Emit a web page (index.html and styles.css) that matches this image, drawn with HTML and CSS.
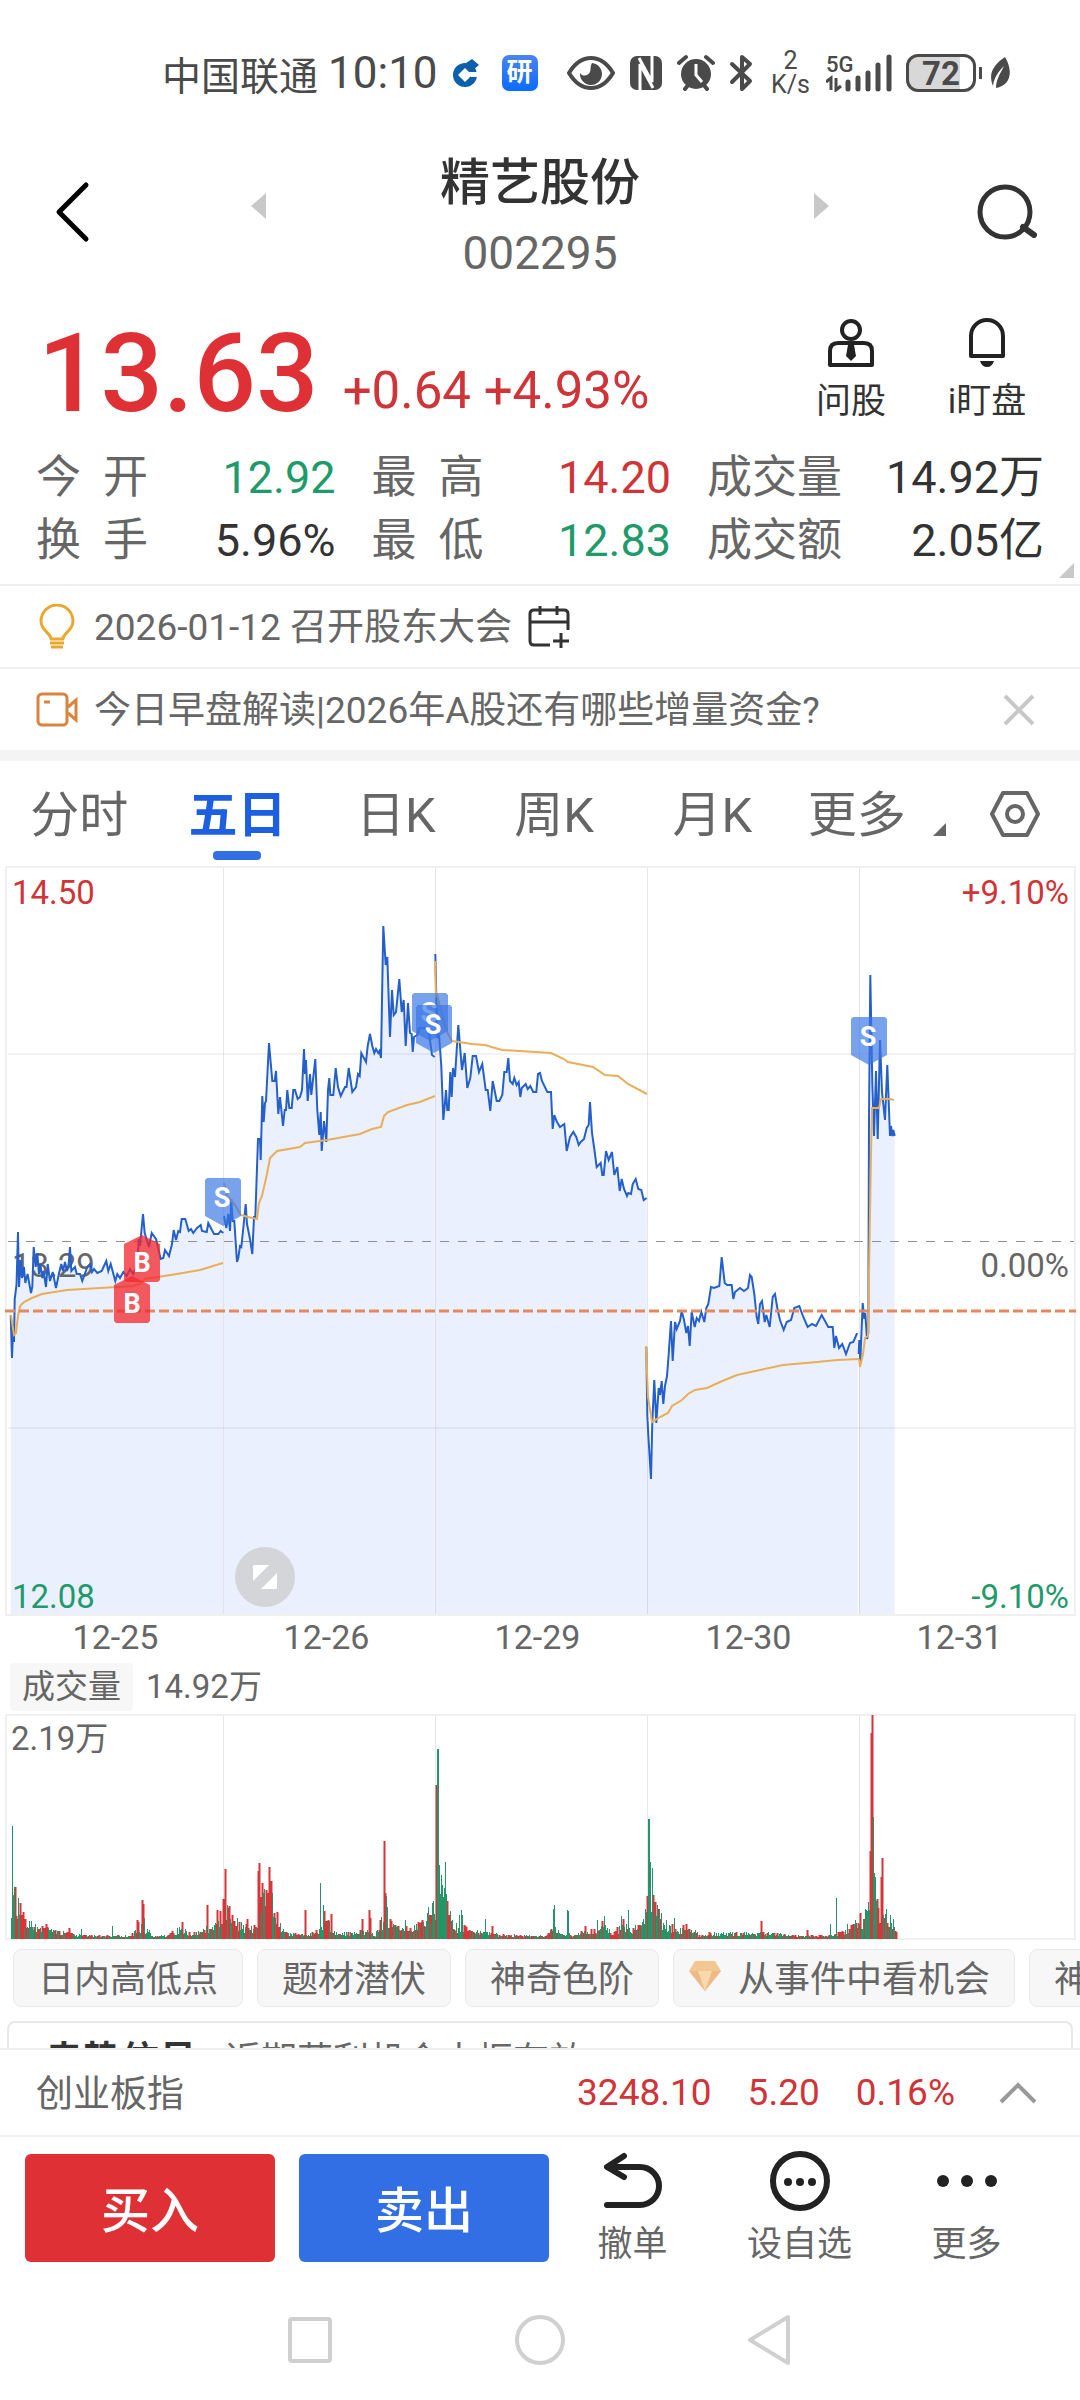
FILE: index.html
```html
<!DOCTYPE html>
<html lang="zh-CN">
<head>
    <meta charset="UTF-8">
    <meta name="viewport" content="width=device-width, initial-scale=1.0">
    <title>精艺股份 002295</title>
    <link rel="stylesheet" href="styles.css">
</head>
<body>
    <div class="app">
        <div class="status-bar">
            <div class="status-group">
                <span class="carrier">中国联通</span>
                <span class="clock">10:10</span>
                <svg class="bank-icon" width="28" height="30" viewBox="0 0 28 30">
                    <circle cx="13" cy="17" r="12" fill="#0b60ab"/>
                    <path d="M14 5l6-4 7 6-6 5z" fill="#0b60ab"/>
                    <path d="M13 10l7 7-7 7-7-7z" fill="#fff"/>
                    <path d="M17 14h11v5h-9z" fill="#fff"/>
                </svg>
                <span class="app-badge">研</span>
            </div>
            <div class="status-group">
                <svg width="48" height="36" viewBox="0 0 48 36">
                    <path d="M2 18C8 8 16 3 24 3s16 5 22 15c-6 10-14 15-22 15S8 28 2 18z" fill="none" stroke="#4a4a4a" stroke-width="4"/>
                    <path d="M25 8a11 11 0 1 1-12 10c3 4 8 3 10-1 1-3 0-6 2-9z" fill="#4a4a4a"/>
                </svg>
                <svg width="34" height="36" viewBox="0 0 34 36">
                    <rect x="1" y="1" width="32" height="34" rx="7" fill="#4a4a4a"/>
                    <path d="M11 36V9l13 24M23 0v27L10 3" fill="none" stroke="#fff" stroke-width="3"/>
                </svg>
                <svg width="38" height="38" viewBox="0 0 38 38">
                    <circle cx="19" cy="20" r="15" fill="#4a4a4a"/>
                    <path d="M2 9l7-6M36 9l-7-6M8 35l4-5M30 35l-4-5" stroke="#4a4a4a" stroke-width="4" stroke-linecap="round"/>
                    <path d="M19 10v11l6 7" fill="none" stroke="#fff" stroke-width="3"/>
                </svg>
                <svg width="26" height="38" viewBox="0 0 26 38">
                    <path d="M3 10l18 17-8 8V3l8 7L3 28" fill="none" stroke="#4a4a4a" stroke-width="4" stroke-linejoin="round" stroke-linecap="round"/>
                </svg>
                <span class="net-speed"><span>2</span><span>K/s</span></span>
                <span class="signal">
                    <span class="signal-type">5G</span>
                    <svg width="66" height="38" viewBox="0 0 66 38">
                        <path d="M0 28l5-4v12M10 24v12l5-4" fill="none" stroke="#4a4a4a" stroke-width="3"/>
                        <path d="M22 28v7M32 24v11M42 19v16M52 11v24M63 3v32" stroke="#4a4a4a" stroke-width="5" stroke-linecap="round"/>
                    </svg>
                </span>
                <span class="battery">72</span>
                <svg class="leaf" width="22" height="34" viewBox="0 0 22 34">
                    <path d="M15 1C3 9-2 18 3 30 4 22 8 16 14 10 10 18 6 24 6 32c14-2 18-16 9-31z" fill="#4a4a4a"/>
                </svg>
            </div>
        </div>

        <main class="content">
            <header class="header">
                <button class="icon-btn back-btn" aria-label="返回">
                    <svg width="36" height="62" viewBox="0 0 36 62"><path d="M32 4L5 31l27 27" fill="none" stroke="#000" stroke-width="5" stroke-linecap="round" stroke-linejoin="round"/></svg>
                </button>
                <div class="stock-switch">
                    <button class="icon-btn" aria-label="上一只">
                        <svg width="16" height="26" viewBox="0 0 16 26"><path d="M16 0v26L1 13z" fill="#c8c8c8"/></svg>
                    </button>
                    <div class="stock-name">
                        <h1>精艺股份</h1>
                        <span>002295</span>
                    </div>
                    <button class="icon-btn" aria-label="下一只">
                        <svg width="16" height="26" viewBox="0 0 16 26"><path d="M0 0v26l15-13z" fill="#c8c8c8"/></svg>
                    </button>
                </div>
                <button class="icon-btn search-btn" aria-label="搜索">
                    <svg width="62" height="58" viewBox="0 0 62 58"><circle cx="29" cy="29" r="25" fill="none" stroke="#333" stroke-width="5"/><path d="M47 44l11 8" stroke="#333" stroke-width="6" stroke-linecap="round"/></svg>
                </button>
            </header>

            <section class="quote">
                <span class="price">13.63</span>
                <span class="change">+0.64 +4.93%</span>
                <div class="quote-actions">
                    <button class="quote-btn">
                        <svg width="46" height="50" viewBox="0 0 46 50">
                            <circle cx="23" cy="12" r="9" fill="none" stroke="#222" stroke-width="4"/>
                            <path d="M2 47V33q0-8 8-8h26q8 0 8 8v14z" fill="none" stroke="#222" stroke-width="4" stroke-linejoin="round"/>
                            <path d="M20 27h6l2 11-5 5-5-5z" fill="#222"/>
                        </svg>
                        问股
                    </button>
                    <button class="quote-btn">
                        <svg width="40" height="50" viewBox="0 0 40 50">
                            <path d="M4 38V18a16 16 0 0 1 32 0v20z" fill="none" stroke="#222" stroke-width="4" stroke-linejoin="round"/>
                            <path d="M13 43h14q-2 6-7 6t-7-6z" fill="#222"/>
                        </svg>
                        i盯盘
                    </button>
                </div>
            </section>

            <dl class="stats">
                <div><dt>今开</dt><dd class="down">12.92</dd></div>
                <div><dt>最高</dt><dd class="up">14.20</dd></div>
                <div><dt>成交量</dt><dd>14.92万</dd></div>
                <div><dt>换手</dt><dd>5.96%</dd></div>
                <div><dt>最低</dt><dd class="down">12.83</dd></div>
                <div><dt>成交额</dt><dd>2.05亿</dd></div>
            </dl>

            <div class="notice">
                <svg width="38" height="46" viewBox="0 0 38 46">
                    <path d="M13 35c0-6-10-8-10-18a16 16 0 0 1 32 0c0 10-10 12-10 18z" fill="none" stroke="#e9a72c" stroke-width="3" stroke-linejoin="round"/>
                    <path d="M12 39h14M13 43h12" stroke="#e9a72c" stroke-width="3"/>
                </svg>
                <a href="#">2026-01-12 召开股东大会</a>
                <svg width="42" height="44" viewBox="0 0 42 44">
                    <path d="M22 40H6q-4 0-4-4V9q0-4 4-4h30q4 0 4 4v16M2 17h38M12 1v9M29 1v9M33 28v15M25 36h16" fill="none" stroke="#333" stroke-width="3"/>
                </svg>
            </div>
            <div class="notice">
                <svg width="42" height="36" viewBox="0 0 42 36">
                    <rect x="2" y="2" width="29" height="31" rx="4" fill="none" stroke="#d8843f" stroke-width="3"/>
                    <path d="M8 10h6M32 15l8-7v20l-8-7" fill="none" stroke="#d8843f" stroke-width="3"/>
                </svg>
                <a href="#">今日早盘解读|2026年A股还有哪些增量资金?</a>
                <button class="close-btn" aria-label="关闭">
                    <svg width="32" height="32" viewBox="0 0 32 32"><path d="M2 2l28 28M30 2L2 30" stroke="#c8c8c8" stroke-width="4"/></svg>
                </button>
            </div>

            <nav class="tabs">
                <button>分时</button>
                <button class="active">五日</button>
                <button>日K</button>
                <button>周K</button>
                <button>月K</button>
                <button class="more-tab">更多</button>
                <button class="settings" aria-label="设置">
                    <svg width="52" height="48" viewBox="0 0 52 48">
                        <path d="M14 3h24l11 21-11 21H14L3 24z" fill="none" stroke="#666" stroke-width="4" stroke-linejoin="round"/>
                        <circle cx="26" cy="24" r="8" fill="none" stroke="#666" stroke-width="4"/>
                    </svg>
                </button>
            </nav>

            <div class="chart">
                <svg id="priceChart" viewBox="0 0 1080 750">
                    <g id="areas" class="area"></g>
                    <g class="grid">
                        <path d="M8 188H1074M8 562H1074M223.500 1V748M435.500 1V748M647.500 1V748M859.500 1V748"/>
                        <rect class="frame" x="6" y="1" width="1069" height="748"/>
                    </g>
                    <path class="zero-line" d="M8 375.500H1074"/>
                    <text class="axis mid" x="12" y="411">13.29</text>
                    <g id="prices" class="price-line"></g>
                    <g id="averages" class="avg-line"></g>
                    <path class="cost-line" d="M5 445H1076"/>
                    <g id="marks"></g>
                    <text class="axis up" x="12" y="38">14.50</text>
                    <text class="axis up end" x="1069" y="38">+9.10%</text>
                    <text class="axis mid end" x="1069" y="411">0.00%</text>
                    <text class="axis down" x="12" y="742">12.08</text>
                    <text class="axis down end" x="1069" y="742">-9.10%</text>
                </svg>
                <button class="expand-btn" aria-label="全屏">
                    <svg width="26" height="26" viewBox="0 0 26 26"><path d="M2 1h15L1 17V2zM25 9v15l-1 1H9z" fill="#fff"/></svg>
                </button>
            </div>
            <div class="dates">
                <span>12-25</span><span>12-26</span><span>12-29</span><span>12-30</span><span>12-31</span>
            </div>

            <div class="volume-head">
                <button>成交量</button>
                <span>14.92万</span>
            </div>
            <svg class="volume-chart" viewBox="0 0 1080 228">
                <g class="grid">
                    <path d="M223.500 1V226M435.500 1V226M647.500 1V226M859.500 1V226"/>
                    <rect class="frame" x="6" y="2" width="1069" height="224"/>
                </g>
                <path id="volUp" class="vol-up"/>
                <path id="volDown" class="vol-down"/>
                <text class="axis mid" x="11" y="37">2.19万</text>
            </svg>

            <div class="chips">
                <button>日内高低点</button>
                <button>题材潜伏</button>
                <button>神奇色阶</button>
                <button class="chip-vip">
                    <svg width="34" height="32" viewBox="0 0 34 32">
                        <path d="M7 1h20l6 10-16 20L1 11z" fill="#f3c791"/>
                        <path d="M1 11h32L17 31z" fill="#efb987"/>
                        <path d="M10 11h14l-7 20z" fill="#f8d9ad"/>
                    </svg>
                    从事件中看机会
                </button>
                <button>神奇电波</button>
            </div>

            <div class="signal-card">
                <strong>走势信号</strong>
                <span>近期获利机会中枢有效</span>
            </div>
        </main>

        <footer>
            <div class="index-row">
                <span class="index-name">创业板指</span>
                <span class="up">3248.10</span>
                <span class="up">5.20</span>
                <span class="up">0.16%</span>
                <button class="icon-btn" aria-label="展开">
                    <svg width="38" height="22" viewBox="0 0 38 22"><path d="M2 20L19 3l17 17" fill="none" stroke="#999" stroke-width="4"/></svg>
                </button>
            </div>
            <div class="trade-bar">
                <button class="trade-btn buy">买入</button>
                <button class="trade-btn sell">卖出</button>
                <div class="tools">
                    <button>
                        <svg width="62" height="62" viewBox="0 0 62 62"><path d="M22 6L5 17l17 10M7 17h31a19 19 0 0 1 0 38H5" fill="none" stroke="#222" stroke-width="6" stroke-linecap="round" stroke-linejoin="round"/></svg>
                        撤单
                    </button>
                    <button>
                        <svg width="62" height="62" viewBox="0 0 62 62"><circle cx="31" cy="31" r="27" fill="none" stroke="#222" stroke-width="6"/><circle cx="19" cy="32" r="4" fill="#222"/><circle cx="31" cy="32" r="4" fill="#222"/><circle cx="43" cy="32" r="4" fill="#222"/></svg>
                        设自选
                    </button>
                    <button>
                        <svg width="62" height="62" viewBox="0 0 62 62"><circle cx="7" cy="31" r="6" fill="#222"/><circle cx="31" cy="31" r="6" fill="#222"/><circle cx="55" cy="31" r="6" fill="#222"/></svg>
                        更多
                    </button>
                </div>
            </div>
            <div class="system-nav">
                <button aria-label="最近任务"><svg width="50" height="52" viewBox="0 0 50 52"><rect x="5" y="5" width="40" height="42" rx="2" fill="none" stroke="#d0d0d0" stroke-width="4"/></svg></button>
                <button aria-label="主页"><svg width="50" height="52" viewBox="0 0 50 52"><circle cx="25" cy="26" r="23" fill="none" stroke="#d0d0d0" stroke-width="4"/></svg></button>
                <button aria-label="返回"><svg width="50" height="52" viewBox="0 0 50 52"><path d="M43 3v46L5 26z" fill="none" stroke="#d0d0d0" stroke-width="4" stroke-linejoin="round"/></svg></button>
            </div>
        </footer>
    </div>
    <script src="chart.js"></script>
</body>
</html>
```
FILE: styles.css
```css
* {
    box-sizing: border-box;
}

body {
    margin: 0;
    font-family: Roboto, "Noto Sans CJK SC", sans-serif;
    background: #fff;
    color: #333;
}

button {
    padding: 0;
    border: none;
    background: none;
    font: inherit;
    color: inherit;
    cursor: pointer;
}

svg {
    display: block;
    flex-shrink: 0;
}

.up {
    color: #cf3438;
    fill: #cf3438;
}

.down {
    color: #1f9a6b;
    fill: #1f9a6b;
}

.app {
    display: flex;
    flex-direction: column;
    height: 100vh;
}

.content {
    flex: 1;
    min-height: 0;
    overflow: hidden;
}

/* Status bar */
.status-bar {
    display: flex;
    justify-content: space-between;
    align-items: center;
    height: 146px;
    padding: 0 68px 0 162px;
    color: #4a4a4a;
}

.status-group {
    display: flex;
    align-items: center;
    gap: 14px;
}

.carrier {
    font-size: 39px;
}

.clock {
    font-size: 44px;
    margin-left: -4px;
}

.app-badge {
    width: 36px;
    height: 36px;
    margin-left: 8px;
    border-radius: 7px;
    background: linear-gradient(#4b84ee, #0a6cff);
    color: #fff;
    font-size: 26px;
    font-weight: 700;
    line-height: 34px;
    text-align: center;
}

.net-speed {
    display: flex;
    flex-direction: column;
    align-items: center;
    padding: 0 2px;
    font-size: 25px;
    line-height: 24px;
}

.signal {
    position: relative;
}

.signal-type {
    position: absolute;
    top: 0;
    left: 0;
    font-size: 22px;
    font-weight: 500;
    line-height: 22px;
}

.battery {
    position: relative;
    width: 70px;
    height: 38px;
    border: 3px solid #4a4a4a;
    border-radius: 12px;
    background: linear-gradient(to right, #d8d8d8 80%, #fff 80%);
    font-size: 33px;
    font-weight: 700;
    line-height: 33px;
    text-align: center;
}

.battery::after {
    content: "";
    position: absolute;
    top: 10px;
    right: -9px;
    width: 3px;
    height: 12px;
    background: #4a4a4a;
}

/* Header */
.header {
    display: grid;
    grid-template-columns: 1fr 580px 1fr;
    grid-template-rows: 100%;
    align-items: center;
    height: 140px;
    padding: 0 42px 8px;
}

.icon-btn {
    display: flex;
}

.back-btn {
    padding-left: 12px;
}

.search-btn {
    justify-self: end;
}

.stock-switch {
    display: flex;
    justify-content: space-between;
    align-items: center;
}

.stock-switch .icon-btn {
    padding-bottom: 12px;
}

.stock-name {
    display: flex;
    flex-direction: column;
    align-items: center;
    padding-top: 10px;
}

.stock-name h1 {
    margin: 0;
    font-size: 50px;
    font-weight: 500;
    line-height: 72px;
}

.stock-name span {
    font-size: 46px;
    line-height: 68px;
    color: #666;
}

/* Quote */
.quote {
    display: flex;
    align-items: flex-end;
    height: 156px;
    padding: 0 53px 18px 38px;
}

.price {
    font-size: 110px;
    font-weight: 500;
    line-height: 100px;
    color: #df3035;
}

.change {
    margin-left: 24px;
    font-size: 51px;
    line-height: 66px;
    color: #cf3438;
}

.quote-actions {
    display: flex;
    gap: 56px;
    margin-left: auto;
}

.quote-btn {
    display: flex;
    flex-direction: column;
    align-items: center;
    gap: 12px;
    min-width: 80px;
    font-size: 35px;
    line-height: 44px;
}

.stats {
    position: relative;
    display: grid;
    grid-template-columns: 8fr 8fr 9fr;
    column-gap: 36px;
    height: 142px;
    margin: 0;
    padding: 5px 36px 12px;
    font-size: 45px;
    line-height: 62px;
}

.stats::after {
    content: "";
    position: absolute;
    right: 6px;
    bottom: 6px;
    border-left: 15px solid transparent;
    border-bottom: 15px solid #c8c8c8;
}

.stats div {
    display: flex;
    justify-content: space-between;
}

.stats dt {
    width: 112px;
    color: #666;
    text-align: justify;
    text-align-last: justify;
}

.stats div:nth-child(3n) dt {
    width: auto;
}

.stats dd {
    margin: 0;
}

/* Notices */
.notice {
    display: flex;
    align-items: center;
    gap: 16px;
    height: 83px;
    padding: 0 40px 0 36px;
    border-top: 2px solid #f0f0f0;
    font-size: 37px;
}

.notice svg:first-child {
    width: 42px;
}

.notice a {
    padding-bottom: 6px;
    color: #666;
    text-decoration: none;
}

.close-btn {
    margin-left: auto;
}

/* Tabs */
.tabs {
    display: grid;
    grid-template-columns: repeat(6, 1fr) 130px;
    height: 116px;
    border-top: 11px solid #f4f4f4;
    font-size: 49px;
    color: #666;
}

.tabs button {
    position: relative;
    padding-bottom: 6px;
}

.tabs .active {
    color: #1c5fe0;
    font-weight: 700;
}

.tabs .active::after {
    content: "";
    position: absolute;
    bottom: 6px;
    left: 50%;
    width: 48px;
    height: 9px;
    margin-left: -24px;
    border-radius: 4px;
    background: #336fe4;
}

.tabs .more-tab {
    padding-right: 28px;
}

.more-tab::after {
    content: "";
    position: absolute;
    right: 4px;
    bottom: 30px;
    border-left: 13px solid transparent;
    border-bottom: 13px solid #666;
}

.tabs .settings {
    display: flex;
    justify-content: center;
    align-items: center;
    padding-bottom: 0;
}

/* Charts */
.chart {
    position: relative;
}

.chart > svg,
.volume-chart {
    width: 100%;
}

.grid {
    fill: none;
    stroke: #3c3c50;
    stroke-opacity: 0.12;
}

.frame {
    stroke: #f0f0f0;
    stroke-opacity: 1;
    stroke-width: 2;
}

.area {
    fill: #eaf0fe;
}

.price-line {
    fill: none;
    stroke: #2560ca;
    stroke-width: 2;
}

.avg-line {
    fill: none;
    stroke: #e9ae57;
    stroke-width: 2;
}

.zero-line {
    stroke: #909090;
    stroke-dasharray: 9 9;
}

.cost-line {
    stroke: #e28a5e;
    stroke-width: 3;
    stroke-dasharray: 10 4;
}

.axis {
    font-size: 33px;
}

.mid {
    fill: #666;
}

.end {
    text-anchor: end;
}

.mark-sell {
    fill: #3a76e4;
    fill-opacity: 0.68;
}

.mark-buy {
    fill: #f5282d;
    fill-opacity: 0.76;
}

.mark-text {
    fill: #fff;
    font-size: 27px;
    font-weight: 700;
    text-anchor: middle;
}

.expand-btn {
    position: absolute;
    left: 235px;
    bottom: 9px;
    display: flex;
    justify-content: center;
    align-items: center;
    width: 60px;
    height: 60px;
    border-radius: 50%;
    background: #d4d5d9;
}

.dates {
    display: flex;
    height: 45px;
    padding: 0 15px 0 10px;
    font-size: 34px;
    line-height: 42px;
    color: #666;
}

.dates span {
    flex: 1;
    text-align: center;
}

.volume-head {
    display: flex;
    align-items: center;
    gap: 13px;
    height: 52px;
    padding-left: 10px;
    font-size: 33px;
    line-height: 46px;
    color: #666;
}

.volume-head button {
    height: 48px;
    padding: 0 12px;
    border-radius: 4px;
    background: #f7f7f7;
}

.vol-up {
    stroke: #d6363a;
    stroke-width: 2;
}

.vol-down {
    stroke: #259468;
    stroke-width: 1;
}

/* Chips */
.chips {
    display: flex;
    gap: 14px;
    padding: 8px 13px 14px;
    overflow: hidden;
}

.chips button {
    display: flex;
    flex-shrink: 0;
    align-items: center;
    height: 58px;
    padding: 0 24px 4px;
    border: 1px solid #eaeaea;
    border-radius: 8px;
    background: #f7f7f7;
    font-size: 36px;
    color: #666;
}

.chips .chip-vip {
    gap: 16px;
    padding-left: 14px;
}

.signal-card {
    display: flex;
    align-items: baseline;
    gap: 28px;
    margin: 0 7px;
    padding: 6px 36px;
    border: 2px solid #e8e8e8;
    border-radius: 8px;
    font-size: 36px;
    color: #666;
}

.signal-card strong {
    font-size: 38px;
    color: #333;
}

/* Footer */
.index-row {
    display: flex;
    align-items: center;
    gap: 36px;
    height: 87px;
    padding: 0 43px 0 36px;
    border-top: 2px solid #f0f0f0;
    font-size: 37px;
}

.index-name {
    margin-right: auto;
    padding-bottom: 4px;
    color: #666;
}

.index-row .icon-btn {
    margin-left: 8px;
}

.trade-bar {
    display: flex;
    gap: 24px;
    height: 145px;
    padding: 17px 30px 0 25px;
    border-top: 2px solid #f0f0f0;
}

.trade-btn {
    width: 250px;
    height: 108px;
    padding-bottom: 4px;
    border-radius: 6px;
    color: #fff;
    font-size: 49px;
    font-weight: 500;
}

.buy {
    background: #df3035;
}

.sell {
    background: #336fe4;
}

.tools {
    display: flex;
    flex: 1;
    margin-left: -24px;
}

.tools button {
    display: flex;
    flex: 1;
    flex-direction: column;
    align-items: center;
    height: 124px;
    margin-top: -4px;
    font-size: 35px;
    line-height: 66px;
    color: #666;
}

.system-nav {
    display: flex;
    height: 120px;
    padding: 34px 18% 0;
}

.system-nav button {
    display: flex;
    flex: 1;
    justify-content: center;
}
```
FILE: chart.js
```js
const SVG_NS = 'http://www.w3.org/2000/svg';
const CHART_BOTTOM = 748;

// One "x,y" list per trading day
const prices = [
    '10.7,449 12,492 13.3,458 14,476 14.7,433 16.5,419 18,366 19,421 20.6,394 22,412 24,401 25.3,417 27.6,408 31,427 32.3,421 33.7,381 35.7,401 37.3,387 39,408 40.3,398 42.3,412 43.5,405 46,421 47.7,398 50,415 52.7,406 56,422 59.3,406 61.3,398 63,405 65,396 67,405 68.7,398 70,381 71.3,405 75,401 76.7,408 80,408 82.3,415 87.3,401 90,398 92,406 94,403 97.3,407 101.7,405 104,400 106.3,395 108.3,405 110.7,398 115.3,415 117.3,408 120,412 123.3,406 126.7,410 130,403 133.3,408 137.3,398 138.7,373 140,380 143,348 144.7,367 149,381 151.7,367 156,373 160.7,393 163.3,392 165,384 169,390 172,378 173.7,364 176,374 178.3,365 180,366 181.7,353 185.3,353 188.7,365 191,363 193.3,367 197,362 200.7,359 202,365 206.7,366 208.3,357 214,368 218.3,368 220.7,365 223.3,367',
    '224,350 226.3,362 228.3,348 230,365 231.3,333 232.7,355 234.3,355 237,396 238.3,392 240,380 241.3,381 243.7,358 245.7,338 247,358 250,373 252.3,388 254,351 255.3,351 258,273 260,273 260.7,294 262.3,230 263.7,256 265,237 266,235 269,177 272.3,215 274.7,215 276,205 278.3,248 280,231 283,260 284.7,244 286,244 287.3,224 289.3,242 291.7,242 293.3,224 295,224 297.7,233 300,231 302,224 304,183 305,208 306,194 307.7,235 310,208 311.3,229 315.3,193 317.3,244 319.3,269 320.7,246 321.7,285 324,255 326.3,276 328,224 329.3,212 330.3,229 333.3,229 335.7,202 338,221 340.7,230 345,221 346.5,221 348.7,202 352.3,226 356,221 358,208 359.7,210 361.3,187 366,196 367.7,180 370,168 372.3,180 374.3,187 376,183 378.3,187 379.5,185 381,192 383.3,60 385.7,99 387.3,91 390,171 392,124 393.7,149 396,146 399.3,113 401.7,146 403.7,134 405.7,180 408,137 410,167 411.7,168 412.7,186 414,171 417.3,169 419.3,162 428.3,162 432,189 434.7,191',
    '435.3,88 437.3,172 439,168 441.3,200 443.3,254 444.7,240 446,224 447.3,244 448.7,244 450.3,206 451.7,231 453,202 455,211 458.3,159 462,204 464.7,187 467.3,222 470.3,212 472.7,190 476,190 479,206 482.3,198 485.7,224 487.7,224 490.3,245 492.7,215 496.7,235 499.3,235 502.3,229 504.3,206 506.7,206 508.3,192 510,215 512.7,218 514.3,212 516.7,219 518.7,216 520.3,231 521.7,222 525.7,218 527.7,223 530.3,220 533.3,226 536.3,226 538,208 540,207 542,215 547.3,226 551,226 552.7,263 554.3,249 557,256 560,261 564.3,258 566.7,285 570,271 573.3,266 576.3,271 578.7,279 580.7,276 584,273 586.7,262 588.7,259 590,236 592,267 594.3,283 596.7,301 600.7,297 602.3,309 603.7,309 606,285 608.7,294 612,286 614.3,309 617.3,301 619.7,325 621.7,313 624,323 627,330 628.3,327 631,328 632.7,318 635.7,313 638.3,323 641.3,324 643.7,334 646.7,332',
    '646.3,481 647.3,549 648.3,569 651,613 652.3,556 654.3,514 656.3,557 658.7,522 660,529 661.7,515 663.3,538 665,520 667,510 668.7,488 671,455 672.7,495 675,456 676.7,463 680,455 681.7,445 684,454 686.3,467 688,460 689.7,480 691.7,446 694.7,461 696.7,452 699,455 701.3,446 704.3,456 706.3,442 708.3,438 711,421 714,422 719.3,420 721.7,391 724.7,417 727.3,419 731.7,419 733.3,433 735,426 740,422 744,425 748,422 750,409 751.7,411 754.3,428 756.7,451 758.3,458 760,438 762,435 764.7,456 766.3,449 769.7,461 772.7,431 775,428 777.3,442 780,454 783.7,464 786.7,456 791,454 794.3,442 799.3,440 803.3,451 807.7,461 812,458 816,460 821.7,449 825,455 828.3,461 832.7,461 834.3,482 836,470 839,482 842.3,478 846,488 850,477 853.3,476 856.7,468 857.7,468',
    '858.7,488 859.3,474 860.3,495 862.7,437 864.3,453 865.3,447 867,473 868.3,467 869,253 870.3,109 872.3,217 874,270 876,205 877.7,273 880,174 882,226 885,254 887.3,199 890,270 891,260 892.3,270 893.3,264 894.7,270'
];

const averages = [
    '11,449 14,469 16,467 18,450 20,440 24,436 32,432 42,428 67,424 100,422 133,420 142,417 145,413 177,408 200,404 223,397',
    '224,317 227,330 230,333 235,339 241,349 248,351 257,353 259,337 262,330 267,308 270,292 277,285 300,281 305,277 327,274 360,268 372,263 381,261 384,250 388,246 407,239 420,236 435,230',
    '435,95 436,130 437,129 442,148 447,166 452,175 472,178 485,179 502,184 551,187 564,193 568,196 593,201 605,209 618,210 628,218 647,228',
    '646,480 648,531 652,556 660,551 668,547 672,540 682,534 688,528 695,524 707,522 720,516 737,509 760,504 783,499 817,496 837,494 859,493',
    '859,493 860,501 863,488 865,472 868,470 871,288 872,242 879,242 881,233 890,233 894,234'
];

// Trades of the account: left edge, top edge
const marks = [
    { type: 'S', x: 205, y: 312 },
    { type: 'S', x: 412, y: 127 },
    { type: 'S', x: 416, y: 139 },
    { type: 'S', x: 851, y: 151 },
    { type: 'B', x: 124, y: 369 },
    { type: 'B', x: 114, y: 410 }
];

function add(parent, name, attrs, text) {
    const el = document.createElementNS(SVG_NS, name);
    Object.keys(attrs).forEach((key) => el.setAttribute(key, attrs[key]));
    if (text) el.textContent = text;
    document.getElementById(parent).appendChild(el);
}

prices.forEach((day) => {
    const points = day.split(' ');
    const first = points[0].split(',')[0];
    const last = points[points.length - 1].split(',')[0];
    add('areas', 'polygon', { points: `${first},${CHART_BOTTOM} ${day} ${last},${CHART_BOTTOM}` });
    add('prices', 'polyline', { points: day });
});

averages.forEach((day) => add('averages', 'polyline', { points: day }));

marks.forEach(({ type, x, y }) => {
    if (type === 'S') {
        add('marks', 'path', { class: 'mark-sell', d: `M${x + 2} ${y}h32l2 2v36l-18 10l-18-10v-36z` });
        add('marks', 'text', { class: 'mark-text', x: x + 17, y: y + 29 }, 'S');
    } else {
        add('marks', 'path', { class: 'mark-buy', d: `M${x + 18} ${y}l18 9v36l-2 2h-32l-2-2v-36z` });
        add('marks', 'text', { class: 'mark-text', x: x + 18, y: y + 37 }, 'B');
    }
});

// Volume: usual level by position, then the single minutes that stand out
const levels = [[11, 40], [18, 36], [21, 22], [28, 14], [40, 10], [60, 7], [75, 4], [90, 3], [130, 3], [143, 12], [152, 4], [165, 3], [180, 9], [190, 5], [200, 6], [213, 13], [220, 22], [228, 26], [234, 14], [250, 11], [256, 14], [260, 42], [267, 42], [272, 36], [277, 16], [285, 5], [300, 4], [315, 6], [325, 18], [335, 5], [350, 5], [362, 9], [375, 4], [383, 20], [388, 18], [395, 11], [405, 13], [412, 8], [425, 18], [434, 34], [440, 50], [446, 36], [452, 18], [458, 10], [462, 14], [468, 7], [480, 6], [500, 4], [520, 3], [545, 3], [553, 10], [560, 5], [575, 4], [590, 8], [604, 14], [612, 4], [622, 13], [632, 9], [644, 18], [650, 46], [656, 28], [664, 14], [675, 10], [690, 10], [700, 3], [715, 6], [730, 5], [770, 6], [790, 3], [830, 3], [845, 7], [857, 14], [864, 18], [870, 34], [877, 30], [884, 18], [890, 18], [896, 9]];
const peaks = {
    12: [113, 'g'], 46: [15, 'r'], 69: [11, 'r'], 81: [10, 'g'], 112: [13, 'g'], 137: [19, 'r'], 138: [17, 'r'], 142: [39, 'r'], 143: [35, 'r'], 144: [21, 'g'],
    182: [17, 'r'], 207: [34, 'r'], 217: [29, 'r'], 220: [28, 'r'], 223: [40, 'r'], 225: [70, 'r'], 228: [31, 'r'], 232: [24, 'r'],
    237: [21, 'g'], 247: [20, 'r'], 258: [68, 'r'], 259: [76, 'r'], 260: [42, 'r'], 264: [50, 'g'], 269: [72, 'r'], 271: [58, 'r'], 272: [46, 'g'], 277: [27, 'r'],
    280: [16, 'g'], 305: [29, 'r'], 320: [56, 'g'], 323: [34, 'g'], 324: [28, 'r'], 331: [25, 'r'], 362: [20, 'r'], 369: [29, 'r'], 370: [21, 'r'],
    384: [98, 'r'], 385: [46, 'r'], 386: [43, 'g'], 387: [32, 'g'], 405: [19, 'g'], 414: [14, 'g'], 432: [36, 'g'], 433: [38, 'g'],
    436: [154, 'r'], 437: [190, 'g'], 438: [190, 'g'], 439: [74, 'g'], 441: [64, 'g'], 443: [42, 'g'], 445: [77, 'g'], 447: [38, 'r'], 450: [28, 'g'],
    459: [24, 'g'], 461: [29, 'g'], 462: [24, 'g'], 485: [20, 'g'], 492: [13, 'r'], 553: [30, 'g'], 554: [34, 'g'], 567: [29, 'g'], 568: [28, 'g'],
    585: [13, 'r'], 597: [19, 'g'], 604: [23, 'g'], 621: [23, 'g'], 623: [20, 'r'], 628: [29, 'g'], 643: [20, 'g'], 645: [30, 'g'], 647: [43, 'r'],
    648: [120, 'g'], 649: [120, 'g'], 650: [77, 'g'], 652: [71, 'g'], 653: [44, 'r'], 655: [37, 'r'], 657: [34, 'g'], 674: [21, 'g'], 686: [15, 'r'],
    761: [18, 'r'], 807: [9, 'r'], 830: [15, 'g'], 836: [41, 'g'], 847: [15, 'g'], 855: [19, 'g'], 860: [26, 'r'], 865: [30, 'g'], 867: [28, 'g'],
    870: [88, 'r'], 871: [206, 'r'], 872: [224, 'r'], 873: [122, 'g'], 874: [66, 'g'], 875: [62, 'g'], 876: [38, 'g'], 878: [31, 'r'],
    881: [62, 'r'], 882: [81, 'r'], 883: [24, 'g'], 886: [30, 'g'], 890: [24, 'g'], 893: [20, 'g']
};

let seed = 2295;
function random() {
    seed = (seed * 16807) % 2147483647;
    return seed / 2147483647;
}

function levelAt(x) {
    const i = levels.findIndex((point) => point[0] >= x);
    if (i <= 0) return levels[0][1];
    const [x0, y0] = levels[i - 1];
    const [x1, y1] = levels[i];
    return y0 + (y1 - y0) * (x - x0) / (x1 - x0);
}

let up = '';
let down = '';
for (let x = 11; x <= 896; x++) {
    let height = Math.max(2, Math.round(levelAt(x) * (0.5 + random() * 0.9)));
    let color = random() < 0.45 ? 'r' : 'g';
    if (peaks[x]) [height, color] = peaks[x];
    const bar = `M${x + 0.5} 226v-${height}`;
    if (color === 'r') up += bar;
    else down += bar;
}
document.getElementById('volUp').setAttribute('d', up);
document.getElementById('volDown').setAttribute('d', down);
```
